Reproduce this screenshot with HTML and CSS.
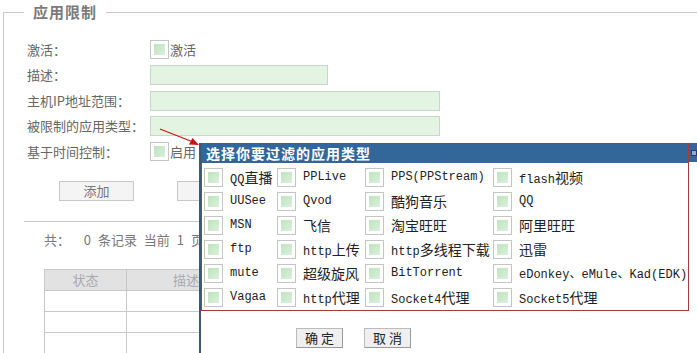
FILE: index.html
```html
<!DOCTYPE html>
<html lang="zh-CN">
<head>
    <meta charset="UTF-8">
    <title>应用限制</title>
    <link rel="stylesheet" href="styles.css">
</head>
<body>
<fieldset class="box">
    <legend>应用限制</legend>
    <div class="form">
        <span class="lbl">激活：</span>
        <span class="field"><span class="chk"></span>激活</span>
        <span class="lbl">描述：</span>
        <span class="field"><span class="inp short"></span></span>
        <span class="lbl">主机IP地址范围：</span>
        <span class="field"><span class="inp"></span></span>
        <span class="lbl">被限制的应用类型：</span>
        <span class="field"><span class="inp"></span></span>
        <span class="lbl">基于时间控制：</span>
        <span class="field"><span class="chk"></span>启用</span>
    </div>
    <div class="btns">
        <button class="btn">添加</button>
        <button class="btn">取消</button>
    </div>
    <div class="sep"></div>
    <p class="count">共：&nbsp; 0 条记录 当前 1 页</p>
    <table class="list">
        <tr><th class="c1">状态</th><th class="c2">描述</th><th class="c3">类型</th></tr>
        <tr><td></td><td></td><td></td></tr>
        <tr><td></td><td></td><td></td></tr>
        <tr><td></td><td></td><td></td></tr>
    </table>
</fieldset>

<svg class="arrow" width="50" height="25" viewBox="0 0 50 25">
    <line x1="5" y1="4" x2="38" y2="17" stroke="#c81414" stroke-width="1.2"/>
    <polygon points="44,20 34,19.5 37.5,13" fill="#c81414"/>
</svg>

<div class="dlg">
    <div class="dlg-top">
        <div class="panel">
            <div class="panel-title">选择你要过滤的应用类型</div>
            <div class="apps">
                <label class="app"><span class="chk"></span><span class="name">QQ<span class="zh">直播</span></span></label>
                <label class="app"><span class="chk"></span><span class="name">PPLive</span></label>
                <label class="app"><span class="chk"></span><span class="name">PPS(PPStream)</span></label>
                <label class="app"><span class="chk"></span><span class="name">flash<span class="zh">视频</span></span></label>
                <label class="app"><span class="chk"></span><span class="name">UUSee</span></label>
                <label class="app"><span class="chk"></span><span class="name">Qvod</span></label>
                <label class="app"><span class="chk"></span><span class="name zh">酷狗音乐</span></label>
                <label class="app"><span class="chk"></span><span class="name">QQ</span></label>
                <label class="app"><span class="chk"></span><span class="name">MSN</span></label>
                <label class="app"><span class="chk"></span><span class="name zh">飞信</span></label>
                <label class="app"><span class="chk"></span><span class="name zh">淘宝旺旺</span></label>
                <label class="app"><span class="chk"></span><span class="name zh">阿里旺旺</span></label>
                <label class="app"><span class="chk"></span><span class="name">ftp</span></label>
                <label class="app"><span class="chk"></span><span class="name">http<span class="zh">上传</span></span></label>
                <label class="app"><span class="chk"></span><span class="name">http<span class="zh">多线程下载</span></span></label>
                <label class="app"><span class="chk"></span><span class="name zh">迅雷</span></label>
                <label class="app"><span class="chk"></span><span class="name">mute</span></label>
                <label class="app"><span class="chk"></span><span class="name zh">超级旋风</span></label>
                <label class="app"><span class="chk"></span><span class="name">BitTorrent</span></label>
                <label class="app"><span class="chk"></span><span class="name">eDonkey<span class="zh dot">、</span>eMule<span class="zh dot">、</span>Kad(EDK)</span></label>
                <label class="app"><span class="chk"></span><span class="name">Vagaa</span></label>
                <label class="app"><span class="chk"></span><span class="name">http<span class="zh">代理</span></span></label>
                <label class="app"><span class="chk"></span><span class="name">Socket4<span class="zh">代理</span></span></label>
                <label class="app"><span class="chk"></span><span class="name">Socket5<span class="zh">代理</span></span></label>
            </div>
        </div>
        <div class="side"><span class="side-mark"></span></div>
    </div>
    <div class="dlg-btns">
        <button class="btn small">确 定</button>
        <button class="btn small">取 消</button>
    </div>
</div>
</body>
</html>
```

FILE: styles.css
```css
body {
    margin: 0;
    width: 697px;
    height: 353px;
    overflow: hidden;
    position: relative;
    background: #fff;
    font-family: "Noto Sans CJK SC", "Liberation Sans", sans-serif;
    font-size: 13px;
    color: #666;
}
.box {
    margin: 2px 0 0 3px;
    padding: 0 0 0 23px;
    width: 800px;
    height: 400px;
    border: 1px solid #c8c8c8;
}
.box legend {
    margin-left: -3px;
    padding: 0 9px;
    font-size: 15px;
    font-weight: bold;
    letter-spacing: 1px;
    line-height: 20px;
    color: #7a7a7a;
}
.form {
    margin-top: 15px;
    display: grid;
    grid-template-columns: 123px 1fr;
    grid-auto-rows: 25.5px;
    align-items: center;
}
.lbl {
    line-height: 18px;
}
.field {
    display: flex;
    align-items: center;
    gap: 1px;
    line-height: 18px;
}
.chk {
    box-sizing: border-box;
    display: inline-block;
    flex: none;
    width: 19px;
    height: 19px;
    border: 1px solid #c4c4c4;
    background: #fff;
    padding: 3px;
}
.chk::after {
    content: "";
    display: block;
    width: 100%;
    height: 100%;
    background: linear-gradient(135deg, #bfe3bf, #daf0da);
}
.inp {
    box-sizing: border-box;
    display: block;
    width: 290px;
    height: 20px;
    background: #e3f4e3;
    border: 1px solid #c9d6c9;
}
.inp.short {
    width: 178px;
}
.btns {
    margin: 16px 0 0 32px;
    display: flex;
    gap: 43px;
}
.btn {
    box-sizing: border-box;
    width: 75px;
    height: 20px;
    padding: 0;
    border: 1px solid #c8c8c8;
    background: #f4f4f4;
    font-family: "Noto Sans CJK SC", sans-serif;
    font-size: 13px;
    line-height: 18px;
    color: #777;
}
.sep {
    margin: 20px 0 0 -3px;
    width: 660px;
    border-top: 1px solid #c8c8c8;
}
.count {
    margin: 9px 0 0 17px;
    line-height: 18px;
    word-spacing: 4px;
    color: #777;
}
.list {
    margin: 20px 0 0 17px;
    border-collapse: collapse;
}
.list th, .list td {
    border: 1px solid #c8c8c8;
    height: 20px;
    padding: 0;
}
.list th {
    background: #e2e2e2;
    font-weight: normal;
    color: #aaa;
}
.c1 { width: 81px; }
.c2 { width: 118px; }
.c3 { width: 120px; }
.arrow {
    position: absolute;
    left: 155px;
    top: 125px;
}
.dlg {
    position: absolute;
    left: 199px;
    top: 143px;
    right: 0;
    bottom: 0;
    border-left: 2px solid #3b5877;
    background: #fff;
}
.dlg-top {
    display: flex;
}
.panel {
    box-sizing: border-box;
    width: 488px;
    border: 1px solid #a83a3a;
}
.panel-title {
    height: 19px;
    padding-left: 4px;
    background: #336699;
    color: #fff;
    font-size: 14px;
    font-weight: bold;
    letter-spacing: 1px;
    line-height: 19px;
}
.apps {
    padding: 2px 0 1px 2px;
    display: grid;
    grid-template-columns: 73px 88px 128px 1fr;
    grid-auto-rows: 24px;
}
.app {
    display: flex;
    align-items: center;
    gap: 7px;
    font-family: "Liberation Mono", monospace;
    font-size: 12px;
    color: #222;
    white-space: nowrap;
}
.zh {
    font-family: "Noto Sans CJK SC", sans-serif;
    font-size: 14px;
}
.zh.dot {
    font-size: 12px;
}
.side {
    flex: 1;
    height: 19px;
    background: #336699;
    position: relative;
}
.side-mark {
    position: absolute;
    left: 2px;
    top: 7px;
    width: 4px;
    height: 4px;
    border: 1px solid #1a3a8a;
    background: #9ab;
}
.dlg-btns {
    margin: 17px 0 0 95px;
    display: flex;
    gap: 21px;
}
.btn.small {
    width: 47px;
    background: #efefef;
    border-color: #bbb #999 #999 #bbb;
    color: #222;
}
```
